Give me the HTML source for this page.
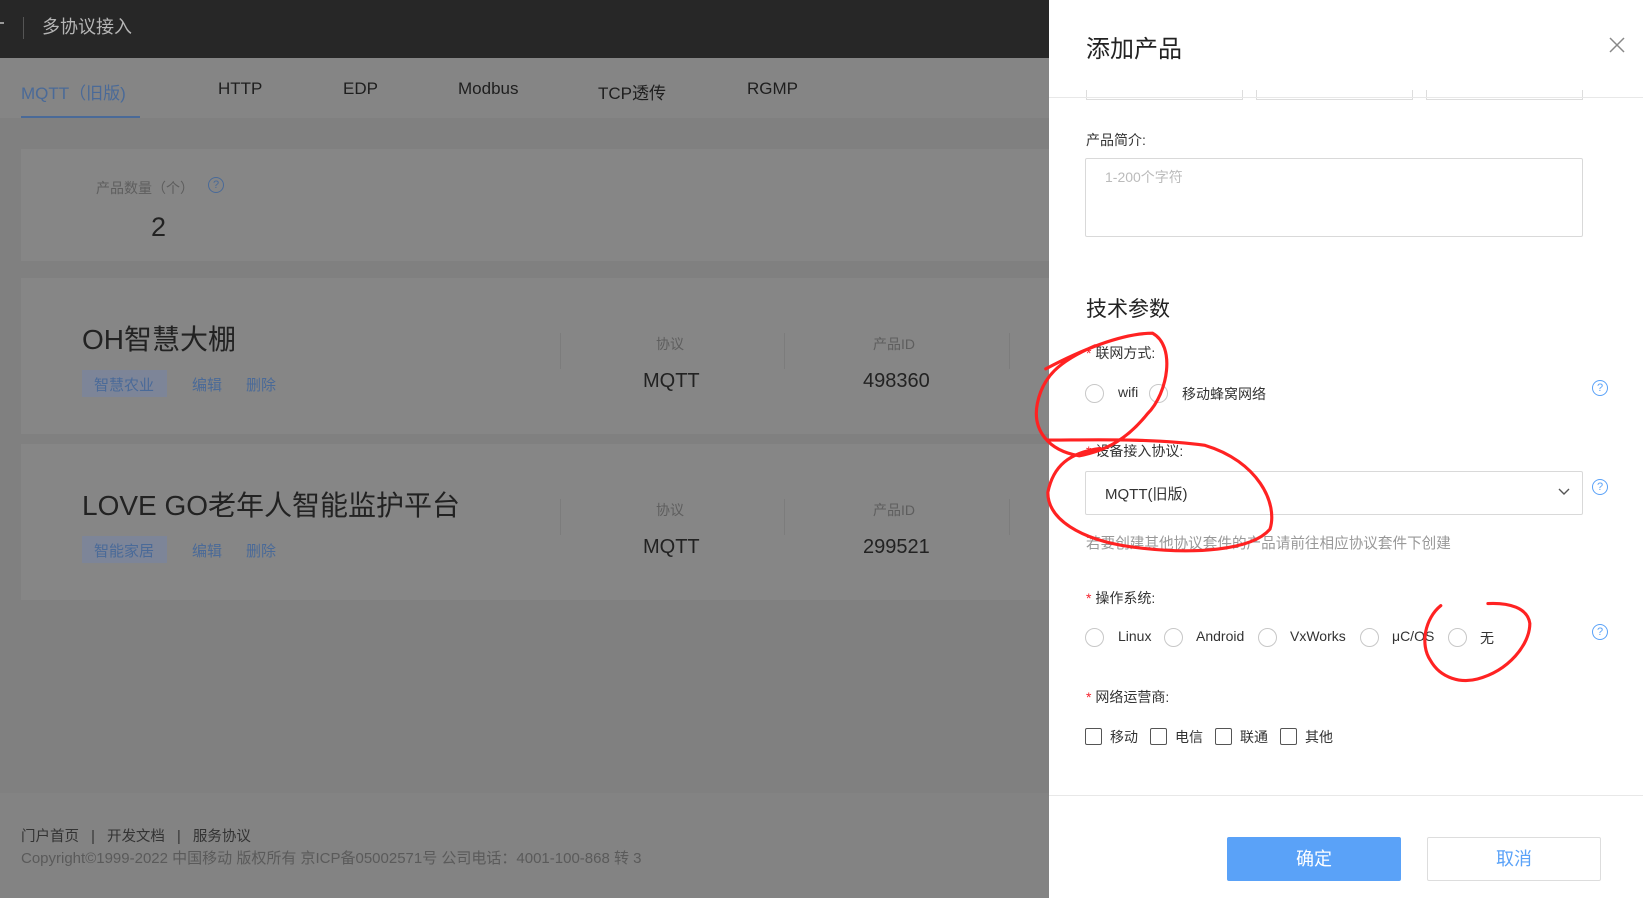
<!DOCTYPE html>
<html><head><meta charset="utf-8"><style>
*{margin:0;padding:0;box-sizing:border-box}
body{width:1643px;height:898px;overflow:hidden;position:relative;background:#808080;font-family:"Liberation Sans","Noto Sans CJK SC",sans-serif;color:#1f1f1f}
.a{position:absolute;white-space:nowrap}
.top{left:0;top:0;width:1049px;height:58px;background:#272727}
.tabs{left:0;top:58px;width:1049px;height:60px;background:#858585}
.tab{top:79px;font-size:17px;color:#1e1e1e}
.card{left:21px;width:1028px;background:#868686}
.lab{font-size:14px;color:#5e5e5e}
.blue{color:#4a6a98}
.sep{width:1px;height:36px;background:#7c7c7c}
.drawer{left:1049px;top:0;width:594px;height:898px;background:#fff}
.dl{font-size:14px;color:#333}
.req{color:#f5222d}
.radio{width:19px;height:19px;border:1px solid #c8c8c8;border-radius:50%;background:#fff}
.cb{width:17px;height:17px;border:1px solid #555;border-radius:2px}
.rt{font-size:14px;color:#333}
.help{width:16px;height:16px;border:1.3px solid #5aa2f8;border-radius:50%;color:#5aa2f8;font-size:11px;text-align:center;line-height:14px}
</style></head><body>
<div class="a top"></div>
<div class="a" style="left:0;top:22px;width:4px;height:2px;background:#999"></div>
<div class="a" style="left:23px;top:17px;width:1px;height:22px;background:#555"></div>
<div class="a" style="left:42px;top:13px;font-size:18px;color:#b5b5b5">多协议接入</div>
<div class="a tabs"></div>
<div class="a tab blue" style="left:21px">MQTT（旧版)</div>
<div class="a" style="left:21px;top:116px;width:119px;height:2px;background:#4a6a98"></div>
<div class="a tab" style="left:218px">HTTP</div>
<div class="a tab" style="left:343px">EDP</div>
<div class="a tab" style="left:458px">Modbus</div>
<div class="a tab" style="left:598px">TCP透传</div>
<div class="a tab" style="left:747px">RGMP</div>

<div class="a card" style="top:149px;height:112px"></div>
<div class="a lab" style="left:96px;top:178px">产品数量（个）</div>
<div class="a" style="left:208px;top:177px;width:16px;height:16px;border:1px solid #4a6a98;border-radius:50%;font-size:11px;text-align:center;line-height:14px;color:#4a6a98">?</div>
<div class="a" style="left:151px;top:212px;font-size:27px;color:#222">2</div>

<div class="a card" style="top:278px;height:156px"></div>
<div class="a" style="left:82px;top:318px;font-size:28px;color:#222">OH智慧大棚</div>
<div class="a" style="left:82px;top:370px;width:85px;height:27px;background:#7d8598"></div>
<div class="a blue" style="left:94px;top:374px;font-size:15px">智慧农业</div>
<div class="a blue" style="left:192px;top:374px;font-size:15px">编辑</div>
<div class="a blue" style="left:246px;top:374px;font-size:15px">删除</div>
<div class="a sep" style="left:560px;top:333px"></div><div class="a sep" style="left:784px;top:333px"></div><div class="a sep" style="left:1009px;top:333px"></div>
<div class="a lab" style="left:656px;top:334px">协议</div>
<div class="a" style="left:643px;top:370px;font-size:20px;color:#222">MQTT</div>
<div class="a lab" style="left:873px;top:334px">产品ID</div>
<div class="a" style="left:863px;top:370px;font-size:20px;color:#222">498360</div>

<div class="a card" style="top:444px;height:156px"></div>
<div class="a" style="left:82px;top:484px;font-size:28px;color:#222">LOVE GO老年人智能监护平台</div>
<div class="a" style="left:82px;top:536px;width:85px;height:27px;background:#7d8598"></div>
<div class="a blue" style="left:94px;top:540px;font-size:15px">智能家居</div>
<div class="a blue" style="left:192px;top:540px;font-size:15px">编辑</div>
<div class="a blue" style="left:246px;top:540px;font-size:15px">删除</div>
<div class="a sep" style="left:560px;top:499px"></div><div class="a sep" style="left:784px;top:499px"></div><div class="a sep" style="left:1009px;top:499px"></div>
<div class="a lab" style="left:656px;top:500px">协议</div>
<div class="a" style="left:643px;top:536px;font-size:20px;color:#222">MQTT</div>
<div class="a lab" style="left:873px;top:500px">产品ID</div>
<div class="a" style="left:863px;top:536px;font-size:20px;color:#222">299521</div>

<div class="a" style="left:0;top:793px;width:1049px;height:105px;background:#838383"></div>
<div class="a" style="left:21px;top:825px;font-size:14.5px;color:#333">门户首页 &nbsp;&nbsp;|&nbsp;&nbsp; 开发文档 &nbsp;&nbsp;|&nbsp;&nbsp; 服务协议</div>
<div class="a" style="left:21px;top:847px;font-size:15px;color:#5a5a5a">Copyright©1999-2022 中国移动 版权所有 京ICP备05002571号 公司电话：4001-100-868 转 3</div>

<div class="a drawer"></div>
<div class="a" style="left:1086px;top:29px;font-size:24px;color:#222">添加产品</div>
<svg class="a" style="left:1609px;top:37px" width="16" height="16"><path d="M1 1L15 15M15 1L1 15" stroke="#888" stroke-width="1.5"/></svg>
<div class="a" style="left:1086px;top:90px;width:157px;height:10px;border:1px solid #ddd;border-top:none"></div>
<div class="a" style="left:1256px;top:90px;width:157px;height:10px;border:1px solid #ddd;border-top:none"></div>
<div class="a" style="left:1426px;top:90px;width:157px;height:10px;border:1px solid #ddd;border-top:none"></div>
<div class="a" style="left:1049px;top:97px;width:594px;height:1px;background:#e8e8e8"></div>
<div class="a dl" style="left:1086px;top:130px">产品简介:</div>
<div class="a" style="left:1085px;top:158px;width:498px;height:79px;border:1px solid #d9d9d9;border-radius:2px"></div>
<div class="a" style="left:1105px;top:167px;font-size:14px;color:#bbb">1-200个字符</div>
<div class="a" style="left:1086px;top:293px;font-size:21px;color:#222">技术参数</div>
<div class="a dl" style="left:1086px;top:343px"><span class="req">*</span> 联网方式:</div>
<div class="a radio" style="left:1085px;top:384px"></div><div class="a rt" style="left:1118px;top:384px">wifi</div>
<div class="a radio" style="left:1149px;top:384px"></div><div class="a rt" style="left:1182px;top:384px">移动蜂窝网络</div>
<div class="a help" style="left:1592px;top:380px">?</div>
<div class="a dl" style="left:1086px;top:441px"><span class="req">*</span> 设备接入协议:</div>
<div class="a" style="left:1085px;top:471px;width:498px;height:44px;border:1px solid #d9d9d9;border-radius:2px"></div>
<div class="a" style="left:1105px;top:483px;font-size:15px;color:#333">MQTT(旧版)</div>
<svg class="a" style="left:1558px;top:488px" width="12" height="8"><path d="M1 1L6 6L11 1" stroke="#555" stroke-width="1.4" fill="none"/></svg>
<div class="a help" style="left:1592px;top:479px">?</div>
<div class="a" style="left:1086px;top:532px;font-size:14.6px;color:#999">若要创建其他协议套件的产品请前往相应协议套件下创建</div>
<div class="a dl" style="left:1086px;top:588px"><span class="req">*</span> 操作系统:</div>
<div class="a radio" style="left:1085px;top:628px"></div><div class="a rt" style="left:1118px;top:628px">Linux</div>
<div class="a radio" style="left:1164px;top:628px"></div><div class="a rt" style="left:1196px;top:628px">Android</div>
<div class="a radio" style="left:1258px;top:628px"></div><div class="a rt" style="left:1290px;top:628px">VxWorks</div>
<div class="a radio" style="left:1360px;top:628px"></div><div class="a rt" style="left:1392px;top:628px">μC/OS</div>
<div class="a radio" style="left:1448px;top:628px"></div><div class="a rt" style="left:1480px;top:628px">无</div>
<div class="a help" style="left:1592px;top:624px">?</div>
<div class="a dl" style="left:1086px;top:687px"><span class="req">*</span> 网络运营商:</div>
<div class="a cb" style="left:1085px;top:728px"></div><div class="a rt" style="left:1110px;top:727px">移动</div>
<div class="a cb" style="left:1150px;top:728px"></div><div class="a rt" style="left:1175px;top:727px">电信</div>
<div class="a cb" style="left:1215px;top:728px"></div><div class="a rt" style="left:1240px;top:727px">联通</div>
<div class="a cb" style="left:1280px;top:728px"></div><div class="a rt" style="left:1305px;top:727px">其他</div>
<div class="a" style="left:1049px;top:795px;width:594px;height:1px;background:#e8e8e8"></div>
<div class="a" style="left:1227px;top:837px;width:174px;height:44px;background:#5aa2f8;border-radius:2px;color:#fff;font-size:18px;text-align:center;line-height:44px">确定</div>
<div class="a" style="left:1427px;top:837px;width:174px;height:44px;border:1px solid #ddd;border-radius:2px;color:#5aa2f8;font-size:18px;text-align:center;line-height:42px">取消</div>

<svg class="a" style="left:0;top:0" width="1643" height="898" viewBox="0 0 1568 857">
<g fill="none" stroke="#f22" stroke-width="3" stroke-linecap="round">
<path d="M998,352 C1030,335 1070,318 1100,318 C1122,330 1115,375 1095,395 C1075,420 1055,430 1030,435 C1000,430 985,410 990,385 C995,360 1010,345 1045,330"/>
<path d="M1000,420 C1040,420 1100,418 1150,425 C1200,440 1220,480 1212,505 C1195,525 1140,530 1080,522 C1030,515 1000,495 1000,470 C1005,445 1020,432 1050,428"/>
<path d="M1375,578 C1360,590 1355,615 1365,630 C1375,648 1395,652 1410,648 C1440,640 1460,615 1460,595 C1458,580 1440,575 1420,576"/>
</g></svg>
</body></html>
